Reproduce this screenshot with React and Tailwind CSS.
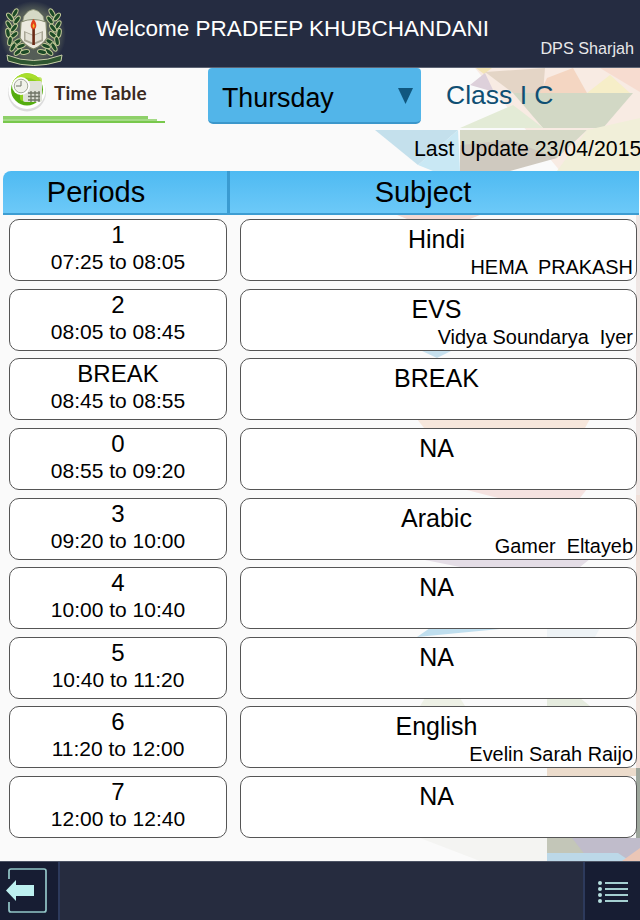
import React from 'react'

const rows = [
  { period: '1', time: '07:25 to 08:05', subject: 'Hindi', teacher: 'HEMA  PRAKASH' },
  { period: '2', time: '08:05 to 08:45', subject: 'EVS', teacher: 'Vidya Soundarya  Iyer' },
  { period: 'BREAK', time: '08:45 to 08:55', subject: 'BREAK' },
  { period: '0', time: '08:55 to 09:20', subject: 'NA' },
  { period: '3', time: '09:20 to 10:00', subject: 'Arabic', teacher: 'Gamer  Eltayeb' },
  { period: '4', time: '10:00 to 10:40', subject: 'NA' },
  { period: '5', time: '10:40 to 11:20', subject: 'NA' },
  { period: '6', time: '11:20 to 12:00', subject: 'English', teacher: 'Evelin Sarah Raijo' },
  { period: '7', time: '12:00 to 12:40', subject: 'NA' },
]

// faint triangles behind the table
const Backdrop = () => (
  <svg className="absolute inset-0" width="640" height="793" viewBox="0 68 640 793">
    {/* top right */}
    <polygon points="475,68 640,68 640,171 560,171" fill="#f8ebe3" />
    <polygon points="476,68 492,68 484,74" fill="#f3e4b4" />
    <polygon points="470,85 485,73 494,92" fill="#ddd0da" />
    <polygon points="485,72 545,68 543,93 513,93" fill="#e4d5c6" />
    <polygon points="547,78 573,68 587,93 540,93" fill="#f4d6c2" />
    <polygon points="587,93 610,75 630,93" fill="#f6eec8" />
    <polygon points="600,68 640,68 640,92" fill="#f7dcd0" />
    <polygon points="513,93 633,93 603,128 543,128" fill="#d2d8c5" />
    <polygon points="460,128 513,105 543,128" fill="#e3ebd6" />
    <polygon points="375,130 458,130 418,165" fill="#c4e0ec" />
    <polygon points="418,165 458,130 460,171 433,171" fill="#c9e8f4" />
    <polygon points="460,130 587,130 557,158 460,171" fill="#d6d9c7" />
    <polygon points="460,171 460,145 510,140 557,158 510,171" fill="#cfc9bf" />
    <polygon points="587,130 640,118 640,171 557,171" fill="#f1efd9" />
    {/* bits that show between the rows */}
    <polygon points="397,215 480,215 470,219 407,219" fill="#f3d9d3" />
    <polygon points="420,350 453,350 437,358" fill="#c6e0ee" />
    <polygon points="417,419 590,419 585,428 424,428" fill="#f7e7dc" />
    <polygon points="463,489 587,489 580,498 498,498" fill="#f5e2e0" />
    <polygon points="420,559 590,559 580,567 460,567" fill="#e4dde6" />
    <polygon points="417,637 510,628 430,628 417,637" fill="#bfdeee" />
    <polygon points="547,628 600,628 595,637 547,637" fill="#eef3f6" />
    <polygon points="425,698 460,698 465,706 420,706" fill="#eef1e6" />
    <polygon points="547,698 580,698 590,706 547,706" fill="#e6ecdf" />
    <polygon points="420,838 547,838 547,861 480,861" fill="#f4f4f2" />
    {/* right edge */}
    <rect x="636" y="215" width="4" height="280" fill="#efe6e4" />
    <rect x="636" y="495" width="4" height="275" fill="#f0dfd8" />
    {/* bottom right */}
    <polygon points="547,768 640,768 640,776 547,776" fill="#ecdccc" />
    <rect x="636" y="768" width="4" height="70" fill="#9ea79d" />
    <rect x="547" y="838" width="93" height="23" fill="#c3c6b8" />
    <polygon points="572,838 640,838 640,853 618,861 590,861" fill="#c0bccb" />
    <polygon points="547,853 618,853 630,861 547,861" fill="#bcd8e8" />
    <polygon points="640,848 640,861 622,861" fill="#ebc6b6" />
  </svg>
)

// leaves along one side of the wreath, mirrored for the other
const leaves = [
  [15, 13, 30], [10, 17, -40], [17, 20, 35], [9, 25, -30], [14, 28, 40], [8, 33, -10],
  [14, 35, 50], [10, 41, 10], [17, 42, 60], [13, 47, 30], [21, 46, 70], [18, 52, 50], [25, 52, 80],
]

const Wreath = () => (
  <>
    {leaves.map(([x, y, r]) => (
      <ellipse key={`${x}-${y}`} cx={x} cy={y} rx="2.200" ry="4.600" transform={`rotate(${r} ${x} ${y})`} fill="#1c4a26" stroke="#c6cc9a" strokeWidth="1" />
    ))}
  </>
)

const Crest = () => (
  <svg width="66" height="67" viewBox="0 0 66 67" className="shrink-0">
    <defs>
      <radialGradient id="glow">
        <stop offset="70%" stopColor="#8f9a72" stopOpacity="0.45" />
        <stop offset="100%" stopColor="#8f9a72" stopOpacity="0" />
      </radialGradient>
    </defs>
    <ellipse cx="33" cy="35" rx="33" ry="34" fill="url(#glow)" />
    <Wreath />
    <g transform="matrix(-1 0 0 1 67 0)">
      <Wreath />
    </g>
    <path d="M24 16 Q33 3 43 16 L45 24 L22 24 Z" fill="#d5d9c6" stroke="#8f9578" strokeWidth="0.800" />
    <path d="M21 22 Q33 17 46 22 L47 38 Q42 46 33.500 49 Q25 46 20 38 Z" fill="#eceadf" stroke="#7f8468" strokeWidth="1.200" />
    <path d="M24 31 L33.500 35 L43 31 L43 41 L33.500 45 L24 41 Z" fill="#a9a695" />
    <path d="M25.500 32.500 L33.500 36 L41.500 32.500 L41.500 39.500 L33.500 43 L25.500 39.500 Z" fill="#e4e2d6" />
    <rect x="32.300" y="28" width="2.600" height="17" fill="#6a2a16" />
    <path d="M33.500 19 C29.500 24 30 28.500 33.500 29.500 C37 28.500 37.500 24 33.500 19 Z" fill="#e2401e" />
    <path d="M33.500 23.500 C32 25.500 32.500 27.500 33.500 28 C35 27.500 35 25.500 33.500 23.500 Z" fill="#f5c22e" />
    <path d="M7 55 Q33 66 62 55 L61 61 Q33 70 8 61 Z" fill="#2e5630" stroke="#c8cfa8" strokeWidth="1" />
  </svg>
)

const ClockIcon = () => (
  <svg width="46" height="46" viewBox="0 0 46 46" className="shrink-0">
    <circle cx="23" cy="23.500" r="19" fill="#dcdcdc" />
    <circle cx="23" cy="21.500" r="18.500" fill="#ffffff" />
    <circle cx="23" cy="20.500" r="16" fill="#55ad0f" />
    <path d="M8 15 A16 16 0 0 1 38 14 L33 12 Q20 4 8 15 Z" fill="#a8de2c" />
    <rect x="16" y="8" width="22" height="24" rx="3" fill="#a5db28" opacity="0.7" />
    <rect x="19" y="12" width="19" height="21" rx="2" fill="#dfe2d8" />
    <circle cx="17" cy="17" r="9" fill="#ffffff" />
    <circle cx="17" cy="17" r="6.800" fill="#f0f2ea" stroke="#8d9380" strokeWidth="0.800" />
    <path d="M17 12 V17 H12" fill="none" stroke="#6f7566" strokeWidth="1" />
    <path d="M24 24 H36 M24 27.500 H36 M24 31 H36 M27 22 V33 M31 22 V33 M35 22 V33" stroke="#6f7566" strokeWidth="1.300" />
  </svg>
)

const ExitIcon = () => (
  <svg width="42" height="46" viewBox="0 0 42 46">
    <path d="M3 11 V3 Q3 1 5 1 H38 Q40 1 40 3 V42 Q40 44 38 44 H5 Q3 44 3 42 V34" fill="none" stroke="#93c6c8" strokeWidth="1.700" />
    <path d="M0 22.500 L10 12 V17 H28 V28 H10 V33 Z" fill="#bdf0f0" />
  </svg>
)

const ListIcon = () => (
  <svg width="30" height="23" viewBox="0 0 30 23">
    {[3, 9, 15, 21].map((y) => (
      <g key={y}>
        <circle cx="2" cy={y - 1} r="2" fill="#b6dfe0" />
        <rect x="7" y={y - 2} width="23" height="2" fill="#a5d0d2" />
      </g>
    ))}
  </svg>
)

export default function App() {
  return (
    <div className="w-[640px] h-[920px] flex flex-col bg-[#fafafa] font-['Liberation_Sans',sans-serif] text-black overflow-hidden">
      <header className="h-[68px] shrink-0 bg-[#252c41] border-b border-[#5d6474] flex">
        <Crest />
        <div className="relative flex-1">
          <p className="ml-[30px] mt-[15px] text-[22.500px] leading-[28px] text-white whitespace-nowrap">Welcome PRADEEP KHUBCHANDANI</p>
          <p className="absolute right-[6px] top-[39px] text-[16.200px] leading-[18px] text-[#e8e8ea] whitespace-nowrap">DPS Sharjah</p>
        </div>
      </header>

      <main className="relative flex-1">
        <Backdrop />
        <div className="relative flex flex-col">
          <div className="h-[103px] flex">
            <div className="w-[208px] shrink-0 pl-[3px]">
              <div className="flex pl-[1px] pt-[1px] h-[48px]">
                <ClockIcon />
                <span className="ml-[4px] mt-[10px] font-['Lato',sans-serif] font-bold text-[19px] leading-[28px] tracking-[0.2px] text-[#3a2a22] whitespace-nowrap">Time Table</span>
              </div>
              <div className="w-[162px] flex flex-col">
                <div className="w-[145px] h-[3px] bg-[#8ed069]" />
                <div className="w-[154px] h-[2px] bg-[#a4da86]" />
                <div className="w-[162px] h-[2px] bg-[#78c84c]" />
              </div>
            </div>
            <div className="flex flex-col flex-1">
              <div className="flex items-center h-[56px]">
                <div className="w-[213px] h-[56px] rounded-b-[5px] rounded-tl-[4px] rounded-tr-[4px] bg-[#52b5e9] border-b-2 border-[#3b97cb] flex items-center justify-between pl-[14px] pr-[8px]">
                  <span className="text-[26.800px] leading-[32px] mt-[5px] text-black">Thursday</span>
                  <svg width="15" height="16" viewBox="0 0 15 16" className="mt-[2px]">
                    <polygon points="0,0 15,0 7.500,16" fill="#10577f" />
                  </svg>
                </div>
                <span className="ml-[25px] text-[26.500px] text-[#0f4f73] whitespace-nowrap">Class I C</span>
              </div>
              <p className="mt-[13px] pl-[206px] text-[21.300px] leading-[24px] whitespace-nowrap">Last Update 23/04/2015</p>
            </div>
          </div>

          <div className="ml-[3px] w-[636px] h-[44px] flex rounded-tl-[8px] bg-gradient-to-b from-[#4ebaf2] to-[#6cc9f8] border-b-2 border-[#3d9dd2]">
            <div className="w-[224px] text-center text-[29px] leading-[42px] pr-[38px]">Periods</div>
            <div className="w-[3px] bg-[#3a9bd1]" />
            <div className="flex-1 text-center text-[29px] leading-[42px] pr-[23px]">Subject</div>
          </div>

          <div className="mt-[4px] flex flex-col gap-[7.625px]">
            {rows.map((row) => (
              <div key={row.time} className="flex h-[62px]">
                <div className="ml-[9px] w-[218px] shrink-0 bg-white rounded-[10px] border border-[#555] text-center">
                  <p className="text-[24px] leading-[27px] mt-[1px]">{row.period}</p>
                  <p className="text-[21px] leading-[24px] mt-[2px]">{row.time}</p>
                </div>
                <div className="ml-[13px] w-[397px] shrink-0 bg-white rounded-[10px] border border-[#555] relative">
                  <p className="text-[25px] leading-[28px] mt-[5px] pr-[4px] text-center">{row.subject}</p>
                  {row.teacher && (
                    <p className="absolute right-[3px] bottom-[1px] text-[19.900px] leading-[24px] whitespace-pre">{row.teacher}</p>
                  )}
                </div>
              </div>
            ))}
          </div>
        </div>
      </main>

      <footer className="h-[59px] shrink-0 bg-[#262c3f] border-t border-[#4c5364] flex justify-between">
        <div className="w-[60px] bg-[#171d33] border-r-2 border-[#2d3a5c] pt-[6px] pl-[6px]">
          <ExitIcon />
        </div>
        <div className="w-[57px] bg-[#171d33] border-l-2 border-[#2d3a5c] pt-[19px] pl-[13px]">
          <ListIcon />
        </div>
      </footer>
    </div>
  )
}
